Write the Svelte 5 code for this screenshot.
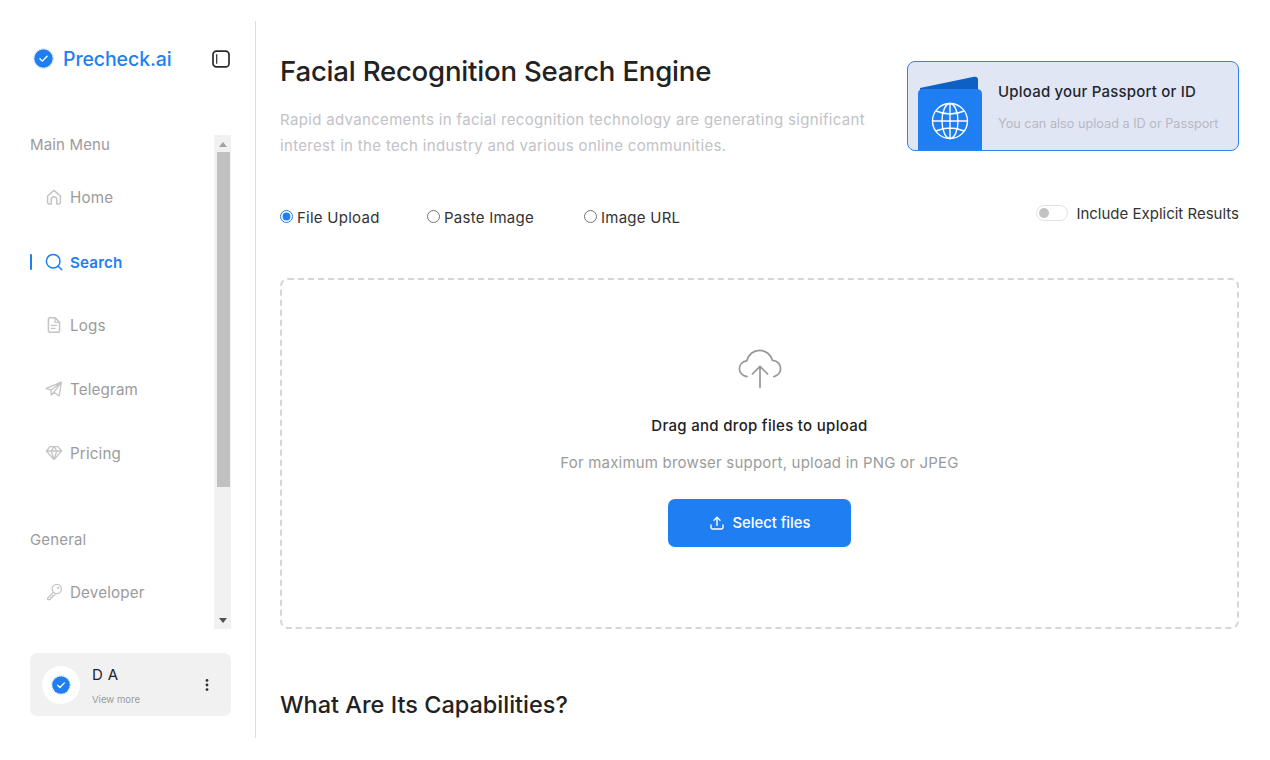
<script>
  const menu = [
    { label: 'Home', icon: 'home' },
    { label: 'Search', icon: 'search', active: true },
    { label: 'Logs', icon: 'logs' },
    { label: 'Telegram', icon: 'telegram' },
    { label: 'Pricing', icon: 'pricing' }
  ];
  const radios = [
    { label: 'File Upload', checked: true, w: 147 },
    { label: 'Paste Image', checked: false, w: 157 },
    { label: 'Image URL', checked: false, w: 110 }
  ];
</script>

{#snippet badge(size)}
  <svg width={size} height={size} viewBox="0 0 20 20" aria-hidden="true">
    <circle cx="10" cy="10" r="9.4" fill="none" stroke="#1f7ff2" stroke-opacity=".45" stroke-width=".8" stroke-dasharray="1 1.2" />
    <circle cx="10" cy="10" r="8.8" fill="#1f7ff2" />
    <path d="M6.6 10.3l2.3 2.2 4.5-4.6" fill="none" stroke="#fff" stroke-width="1.3" stroke-linecap="round" stroke-linejoin="round" />
  </svg>
{/snippet}

{#snippet icon(name)}
  <svg class="nav-icon" width="18" height="18" viewBox="0 0 18 18" fill="none" stroke="currentColor" stroke-width="1.5" stroke-linecap="round" stroke-linejoin="round" aria-hidden="true">
    {#if name === 'home'}
      <path d="M2.6 8L9 2.4 15.4 8v6.6a1.4 1.4 0 0 1-1.4 1.4h-2.2v-4.5a2.8 2.8 0 0 0-5.6 0V16H4a1.4 1.4 0 0 1-1.4-1.4z" />
    {:else if name === 'search'}
      <circle cx="8.2" cy="8.2" r="6.8" /><path d="M13.2 13.2l3.6 3.6" />
    {:else if name === 'logs'}
      <path d="M3.4 3.6A1.8 1.8 0 0 1 5.2 1.8h5l4.4 4.4v8.2a1.8 1.8 0 0 1-1.8 1.8H5.2a1.8 1.8 0 0 1-1.8-1.8z" /><path d="M10 2v4.4h4.4M6.2 9.4h5.4M6.2 12.4h3.8" stroke-width="1.2" />
    {:else if name === 'telegram'}
      <path d="M1.2 8.4L16.4 2.2l-2.2 13.8-5.2-3.8-2.6 2.8-.6-4.8zM5.8 10.2L16.4 2.2 9 12.2" stroke-width="1.3" />
    {:else if name === 'pricing'}
      <path d="M5 2.6h8l3.6 4.4L9 15.6 1.4 7zM1.4 7h15.2M6.2 7L9 15.6 11.8 7M6.2 7L9 2.6 11.8 7" stroke-width="1.3" />
    {:else}
      <circle cx="11.8" cy="6" r="4.6" stroke-width="1.3" /><path d="M8.4 9.4l-5.8 5.8v1.4h2.6l.4-1.6 1.6-.4.2-1.6 1.6-.4 1-1" stroke-width="1.3" /><circle cx="13" cy="4.8" r=".7" stroke-width="1" />
    {/if}
  </svg>
{/snippet}

<div class="page">
  <aside class="sidebar">
    <div class="brand">
      <div class="logo">
        {@render badge(21)}
        <span>Precheck.ai</span>
      </div>
      <svg class="collapse" width="18" height="18" viewBox="0 0 18 18" fill="none" stroke="#2b2b2b" aria-hidden="true">
        <rect x="1" y="1.2" width="16" height="15.6" rx="3.4" stroke-width="1.7" />
        <path d="M4.7 4.2v9.6" stroke-width="1.2" />
      </svg>
    </div>

    <div class="nav-wrap">
      <nav class="nav">
        <h3 class="section first">Main Menu</h3>
        {#each menu as item}
          <a class="item" class:active={item.active} href="#top">
            {#if item.active}<i class="bar"></i>{/if}
            {@render icon(item.icon)}
            <span>{item.label}</span>
          </a>
        {/each}
        <h3 class="section">General</h3>
        <a class="item" href="#top">
          {@render icon('developer')}
          <span>Developer</span>
        </a>
      </nav>
      <div class="scrollbar" aria-hidden="true">
        <b class="arrow up"></b>
        <div class="thumb"></div>
        <b class="arrow down"></b>
      </div>
    </div>

    <div class="user">
      <div class="avatar">{@render badge(20)}</div>
      <div class="who">
        <strong>D A</strong>
        <small>View more</small>
      </div>
      <svg width="4" height="14" viewBox="0 0 4 14" fill="#333" aria-hidden="true">
        <circle cx="2" cy="2.4" r="1.4" /><circle cx="2" cy="7" r="1.4" /><circle cx="2" cy="11.6" r="1.4" />
      </svg>
    </div>
  </aside>

  <main class="main">
    <header class="head">
      <div class="intro">
        <h1>Facial Recognition Search Engine</h1>
        <p>Rapid advancements in facial recognition technology are generating significant interest in the tech industry and various online communities.</p>
      </div>
      <div class="passport">
        <svg class="book" width="64" height="74" viewBox="0 0 64 74" aria-hidden="true">
          <path d="M2 12L56 0.8Q60 0.2 60 4V74H2z" fill="#0f60c4" />
          <path d="M0 18Q0 13 5 13H58Q64 13 64 18V74H0z" fill="#1f7ff2" />
          <g fill="none" stroke="#fff" stroke-width="1.4">
            <circle cx="32" cy="45" r="17.5" />
            <ellipse cx="32" cy="45" rx="8" ry="17.5" />
            <path d="M32 27.5v35M14.5 45h35M18 35q14 6 28 0M18 55q14-6 28 0" />
          </g>
        </svg>
        <div class="pass-text">
          <h4>Upload your Passport or ID</h4>
          <span>You can also upload a ID or Passport</span>
        </div>
      </div>
    </header>

    <div class="options">
      <div class="radios">
        {#each radios as r}
          <label class="radio" style="width:{r.w}px">
            <input type="radio" name="mode" checked={r.checked} />
            <span>{r.label}</span>
          </label>
        {/each}
      </div>
      <div class="explicit">
        <span class="toggle"><i></i></span>
        <span>Include Explicit Results</span>
      </div>
    </div>

    <section class="drop">
      <svg class="cloud" width="44" height="40" viewBox="0 0 44 40" fill="none" stroke="#979797" stroke-width="1.7" stroke-linecap="round" stroke-linejoin="round" aria-hidden="true">
        <path d="M9 27.6C4.6 27 1.4 23.8 1.4 19.6c0-4.2 3.2-7.4 7.4-7.8C10.2 5.6 15.4 1.4 21.6 1.4c6.2 0 11.4 4.2 12.8 10 4.6.2 8.2 3.6 8.2 8.2 0 4-2.8 7.2-6.8 8" />
        <path d="M22 38.4V17.4M14.4 25L22 17.4 29.6 25" />
      </svg>
      <h5>Drag and drop files to upload</h5>
      <p>For maximum browser support, upload in PNG or JPEG</p>
      <button type="button">
        <svg width="16" height="16" viewBox="0 0 16 16" fill="none" stroke="#fff" stroke-width="1.4" stroke-linecap="round" stroke-linejoin="round" aria-hidden="true">
          <path d="M8 10.4V2.4M5 5.2l3-3 3 3M2 10v2.6A1.4 1.4 0 0 0 3.4 14h9.2a1.4 1.4 0 0 0 1.4-1.4V10" />
        </svg>
        Select files
      </button>
    </section>

    <h2>What Are Its Capabilities?</h2>
  </main>
</div>

<style>
  :global(body) {
    margin: 0;
    background: #fff;
    overflow: hidden;
  }
  .page {
    display: flex;
    align-items: flex-start;
    height: 739px;
    padding-top: 21px;
    overflow: hidden;
    font-family: Inter, "Noto Sans", sans-serif;
    color: #222;
  }
  .sidebar {
    box-sizing: border-box;
    flex: none;
    display: flex;
    flex-direction: column;
    width: 256px;
    height: 717px;
    padding: 0 24px 0 30px;
    border-right: 1px solid #dcdcdc;
  }
  .brand {
    display: flex;
    align-items: center;
    justify-content: space-between;
    height: 75px;
    margin-bottom: 39px;
  }
  .logo {
    display: flex;
    align-items: center;
    gap: 9.5px;
    margin-left: 2.5px;
    color: #1f7ff2;
    font-size: 19.5px;
    font-weight: 500;
    letter-spacing: -0.1px;
  }
  .collapse {
    margin-right: 1px;
  }
  .nav-wrap {
    display: flex;
    height: 494px;
    overflow: hidden;
  }
  .nav {
    flex: 1;
    min-width: 0;
  }
  .section {
    margin: 0;
    height: 20px;
    line-height: 20px;
    color: #9b9b9b;
    font-size: 15px;
    font-weight: 400;
    letter-spacing: 0.15px;
  }
  .section:not(.first) {
    margin-top: 45px;
    margin-bottom: 10px;
  }
  .first + .item {
    margin-top: 10px;
  }
  .item {
    position: relative;
    display: flex;
    align-items: center;
    gap: 7px;
    height: 64px;
    padding-left: 15px;
    color: #9b9b9b;
    font-size: 15.2px;
    letter-spacing: 0.15px;
    text-decoration: none;
    box-sizing: border-box;
  }
  .nav-icon {
    flex: none;
    color: #c4c4c4;
  }
  .item.active {
    color: #1f7ff2;
    font-weight: 600;
    padding-top: 2px;
  }
  .item.active .nav-icon {
    color: #1f7ff2;
  }
  .bar {
    position: absolute;
    left: 0;
    top: 50%;
    width: 2px;
    height: 16px;
    margin-top: -7px;
    border-radius: 1px;
    background: #1f7ff2;
  }
  .scrollbar {
    flex: none;
    display: flex;
    flex-direction: column;
    align-items: center;
    width: 17px;
    background: #f1f1f1;
  }
  .thumb {
    width: 13px;
    height: 335px;
    margin-left: 1px;
    background: #c1c1c1;
  }
  .arrow {
    flex: none;
    display: block;
    width: 0;
    height: 0;
    border-left: 4px solid transparent;
    border-right: 4px solid transparent;
  }
  .arrow.up {
    margin: 7px 0 5px;
    border-bottom: 5px solid #a3a3a3;
  }
  .arrow.down {
    margin-top: 131px;
    border-top: 5px solid #505050;
  }
  .user {
    display: flex;
    align-items: center;
    height: 63px;
    margin-top: 24px;
    padding: 0 22px 0 12px;
    box-sizing: border-box;
    border-radius: 7px;
    background: #f1f1f1;
  }
  .avatar {
    flex: none;
    display: flex;
    align-items: center;
    justify-content: center;
    width: 38px;
    height: 38px;
    border-radius: 50%;
    background: #fff;
  }
  .who {
    flex: 1;
    display: flex;
    flex-direction: column;
    gap: 9px;
    margin: 1px 0 0 12px;
  }
  .who strong {
    color: #1c2333;
    font-size: 15px;
    font-weight: 400;
    line-height: 20px;
    letter-spacing: 0.4px;
  }
  .who small {
    color: #9b9b9b;
    font-size: 9.6px;
    line-height: 12px;
  }
  .main {
    flex: 1;
    min-width: 0;
    padding: 0 31px 0 24px;
  }
  .head {
    display: flex;
    justify-content: space-between;
    align-items: flex-start;
    padding-top: 40px;
  }
  .intro {
    width: 600px;
  }
  h1 {
    margin: -9px 0 0;
    color: #222;
    font-size: 27.6px;
    font-weight: 500;
    line-height: 38px;
    letter-spacing: -0.22px;
  }
  .intro p {
    margin: 17px 0 0;
    color: #c2c2c7;
    font-size: 15px;
    line-height: 26px;
    letter-spacing: 0.33px;
  }
  .passport {
    box-sizing: border-box;
    display: flex;
    width: 332px;
    height: 90px;
    overflow: hidden;
    border: 1px solid #2a83f0;
    border-radius: 8px;
    background: #e1e6f4;
    padding: 14px 0 0 10px;
  }
  .book {
    flex: none;
  }
  .pass-text {
    margin-left: 16px;
    display: flex;
    flex-direction: column;
  }
  .pass-text h4 {
    margin: 5px 0 0;
    font-size: 15px;
    font-weight: 500;
    line-height: 22px;
    letter-spacing: 0.2px;
    white-space: nowrap;
    color: #24262e;
  }
  .pass-text span {
    margin-top: 11px;
    font-size: 12.7px;
    line-height: 20px;
    color: #b6b9c4;
    white-space: nowrap;
  }
  .options {
    display: flex;
    justify-content: space-between;
    align-items: center;
    margin-top: 43px;
    height: 30px;
  }
  .radios {
    display: flex;
  }
  .radio {
    display: flex;
    align-items: center;
    gap: 4px;
    font-size: 15px;
    letter-spacing: 0.25px;
    color: #333;
  }
  .radio input {
    margin: 0 0 2px 0;
    accent-color: #1f7ff2;
  }
  .explicit {
    display: flex;
    align-items: center;
    gap: 8px;
    font-size: 15px;
    color: #333;
    margin-top: -8px;
  }
  .toggle {
    box-sizing: border-box;
    display: flex;
    align-items: center;
    width: 32px;
    height: 16px;
    padding-left: 2px;
    border: 1px solid #e2e2e2;
    border-radius: 8px;
    background: #fff;
  }
  .toggle i {
    display: block;
    width: 10px;
    height: 10px;
    border-radius: 50%;
    background: #c2c2c2;
  }
  .drop {
    box-sizing: border-box;
    display: flex;
    flex-direction: column;
    align-items: center;
    height: 351px;
    margin-top: 46px;
    padding-top: 69px;
    border: 2px dashed #d6d6d6;
    border-radius: 8px;
  }
  .cloud {
    display: block;
  }
  h5 {
    margin: 27px 0 0;
    color: #222;
    font-size: 15px;
    font-weight: 500;
    line-height: 20px;
    letter-spacing: 0.3px;
  }
  .drop p {
    margin: 17px 0 0;
    color: #9b9b9b;
    font-size: 15px;
    line-height: 20px;
    letter-spacing: 0.2px;
  }
  button {
    display: flex;
    align-items: center;
    justify-content: center;
    gap: 8px;
    width: 183px;
    height: 48px;
    margin-top: 26px;
    border: 0;
    border-radius: 7px;
    background: #1f7ff2;
    color: #fff;
    font: 500 14.8px Inter, "Noto Sans", sans-serif;
  }
  h2 {
    margin: 60px 0 0;
    color: #222;
    font-size: 23.5px;
    font-weight: 500;
    line-height: 32px;
  }
</style>
